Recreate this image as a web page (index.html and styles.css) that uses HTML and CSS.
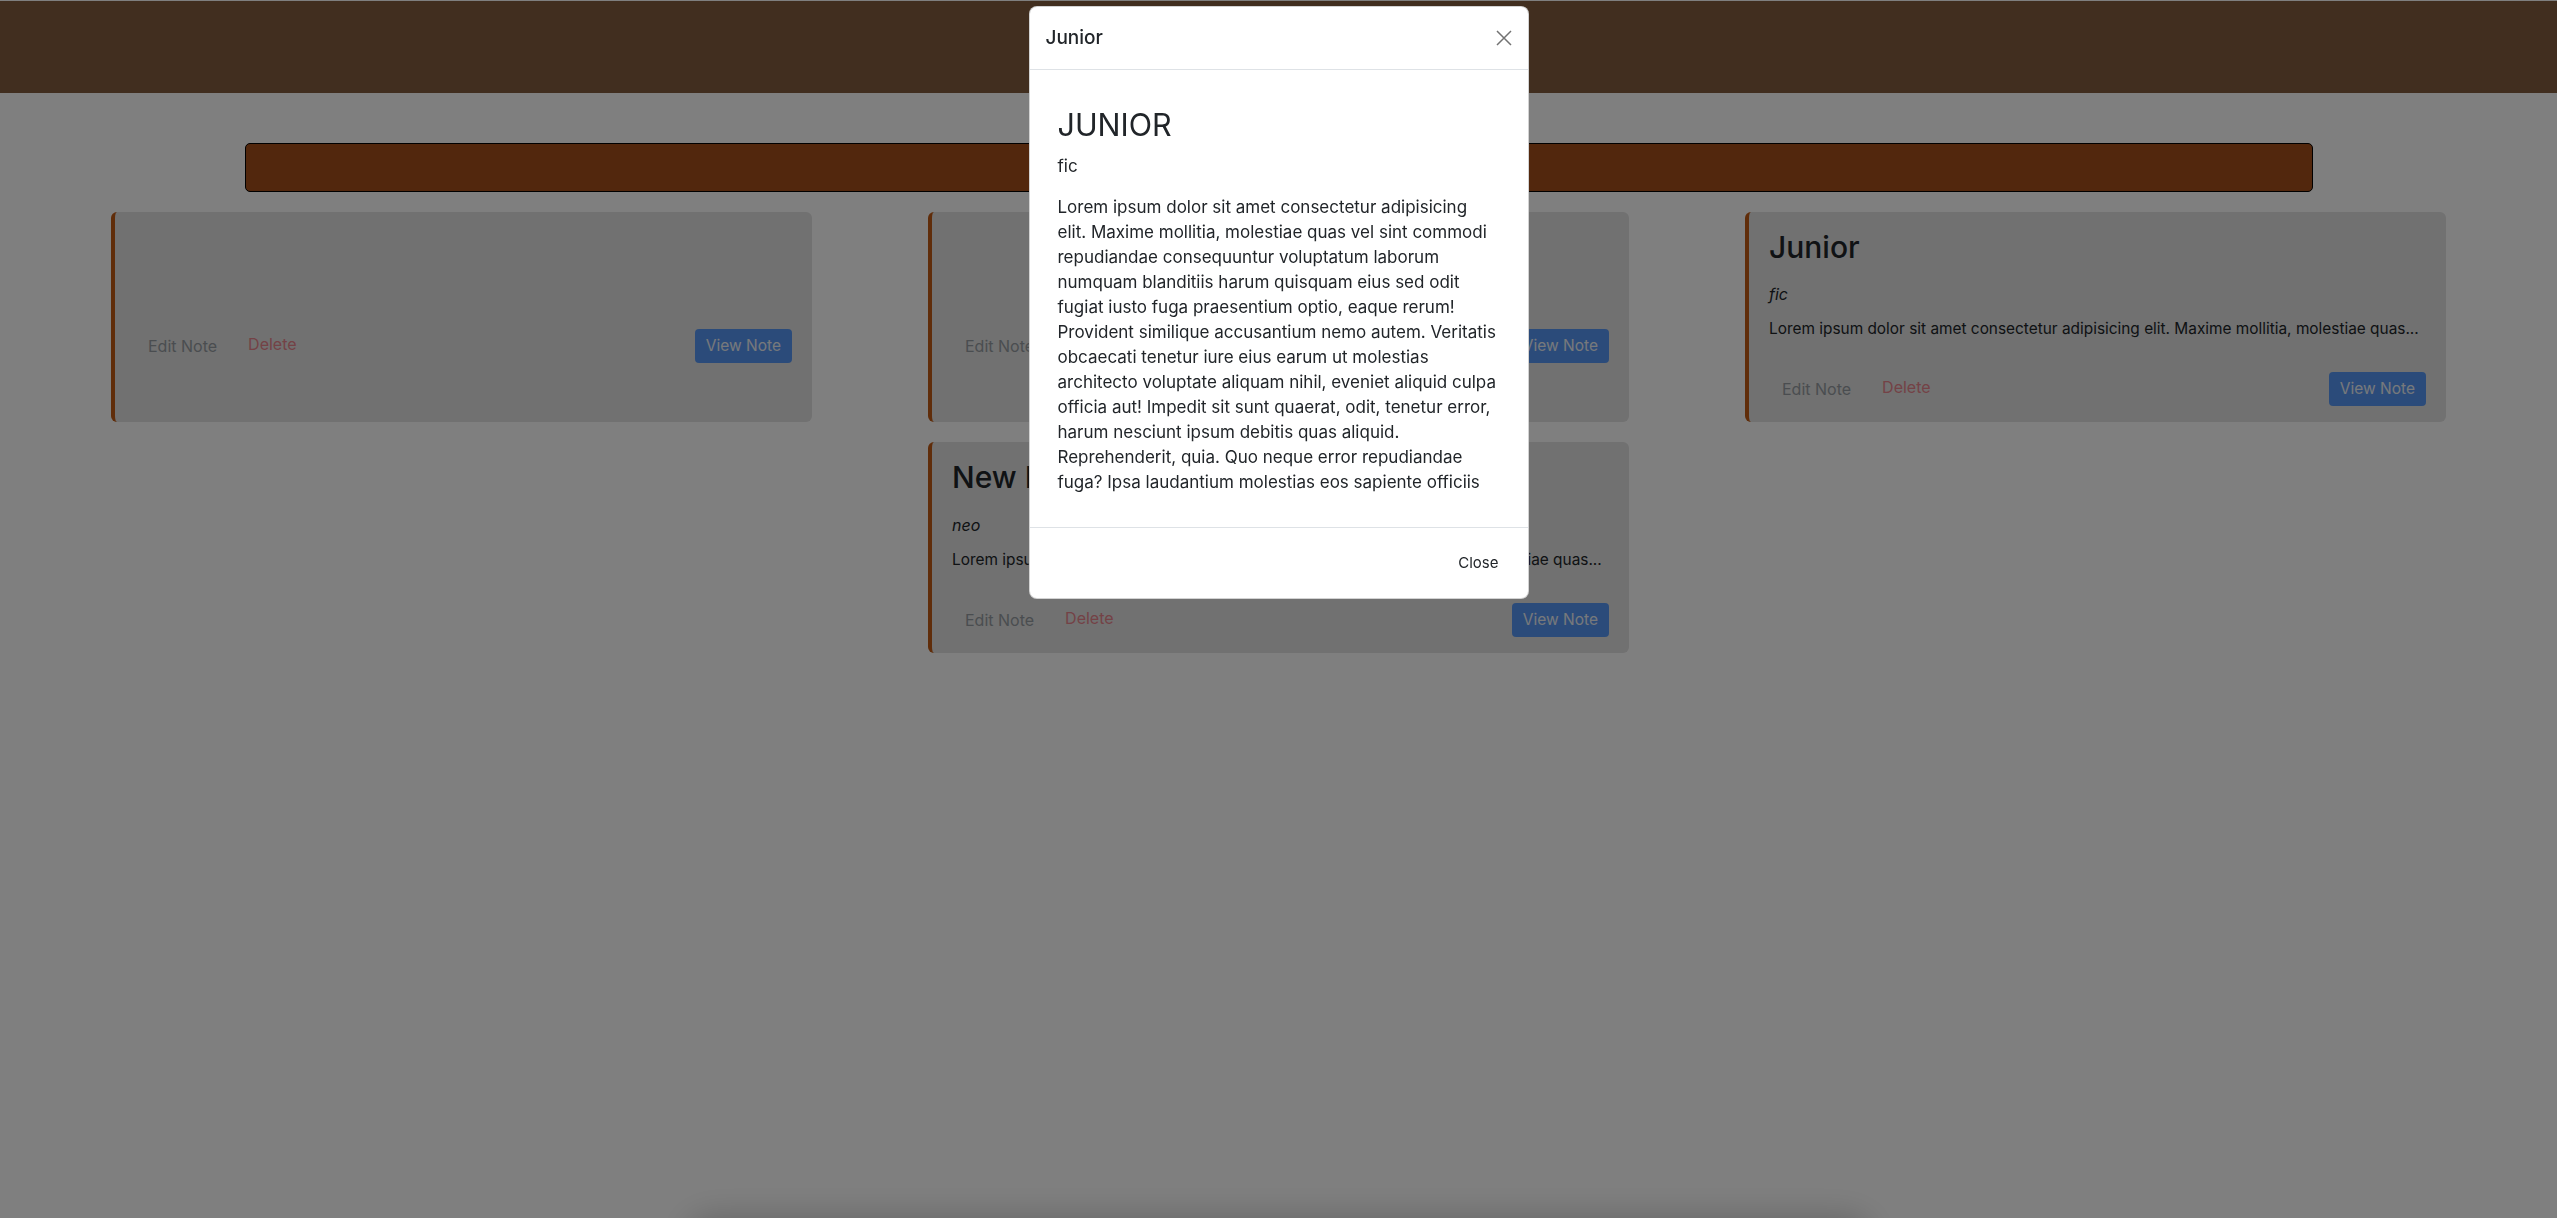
FILE: index.html
```html
<!DOCTYPE html>
<html lang="en">
<head>
<meta charset="utf-8">
<title>Notes</title>
<link rel="stylesheet" href="styles.css">
</head>
<body>
<header class="topbar"></header>
<main class="page">
  <div class="banner"></div>
  <section class="notes">
    <article class="note">
      <div class="note-body">
        <h2 class="note-title"></h2>
        <p class="note-tag"></p>
        <p class="note-text"></p>
      </div>
      <div class="note-actions">
        <div class="note-actions-left">
          <button class="btn btn-edit">Edit Note</button>
          <button class="btn btn-delete">Delete</button>
        </div>
        <button class="btn btn-view">View Note</button>
      </div>
    </article>
    <article class="note">
      <div class="note-body">
        <h2 class="note-title"></h2>
        <p class="note-tag"></p>
        <p class="note-text"></p>
      </div>
      <div class="note-actions">
        <div class="note-actions-left">
          <button class="btn btn-edit">Edit Note</button>
          <button class="btn btn-delete">Delete</button>
        </div>
        <button class="btn btn-view">View Note</button>
      </div>
    </article>
    <article class="note">
      <div class="note-body">
        <h2 class="note-title">Junior</h2>
        <p class="note-tag">fic</p>
        <p class="note-text">Lorem ipsum dolor sit amet consectetur adipisicing elit. Maxime mollitia, molestiae quas...</p>
      </div>
      <div class="note-actions">
        <div class="note-actions-left">
          <button class="btn btn-edit">Edit Note</button>
          <button class="btn btn-delete">Delete</button>
        </div>
        <button class="btn btn-view">View Note</button>
      </div>
    </article>
    <article class="note">
      <div class="note-body">
        <h2 class="note-title">New Note</h2>
        <p class="note-tag">neo</p>
        <p class="note-text">Lorem ipsum dolor sit amet consectetur adipisicing elit. Maxime mollitia, molestiae quas...</p>
      </div>
      <div class="note-actions">
        <div class="note-actions-left">
          <button class="btn btn-edit">Edit Note</button>
          <button class="btn btn-delete">Delete</button>
        </div>
        <button class="btn btn-view">View Note</button>
      </div>
    </article>
  </section>
</main>
<div class="dock"></div>

<div class="backdrop"></div>
<div class="modal">
  <div class="modal-dialog">
    <div class="modal-header">
      <h5 class="modal-title">Junior</h5>
      <button class="btn-close" aria-label="Close">
        <svg width="16" height="16" viewBox="0 0 16 16"><path d="M1 1 L15 15 M15 1 L1 15" stroke="#000" stroke-width="1.5" fill="none"/></svg>
      </button>
    </div>
    <div class="modal-body">
      <div class="note-detail">
        <h2 class="detail-title">JUNIOR</h2>
        <p class="detail-tag">fic</p>
        <p class="detail-text">Lorem ipsum dolor sit amet consectetur adipisicing elit. Maxime mollitia, molestiae quas vel sint commodi repudiandae consequuntur voluptatum laborum numquam blanditiis harum quisquam eius sed odit fugiat iusto fuga praesentium optio, eaque rerum! Provident similique accusantium nemo autem. Veritatis obcaecati tenetur iure eius earum ut molestias architecto voluptate aliquam nihil, eveniet aliquid culpa officia aut! Impedit sit sunt quaerat, odit, tenetur error, harum nesciunt ipsum debitis quas aliquid. Reprehenderit, quia. Quo neque error repudiandae fuga? Ipsa laudantium molestias eos sapiente officiis</p>
      </div>
    </div>
    <div class="modal-footer">
      <button class="btn btn-close-text">Close</button>
    </div>
  </div>
</div>
</body>
</html>
```
FILE: styles.css
```css
* { box-sizing: border-box; }

html, body {
  margin: 0;
  height: 100%;
}

body {
  padding-top: 1px;
  background: #ffffff;
  color: #212529;
  font-family: Inter, "Noto Sans", "Liberation Sans", sans-serif;
  font-size: 16px;
  line-height: 1.5;
  overflow: hidden;
}

.topbar {
  height: 92px;
  background: #825c3e;
}

.page {
  padding-top: 50px;
}

.banner {
  width: 2068px;
  height: 49px;
  margin: 0 auto 20px;
  background: #a44e1a;
  border: 1px solid #000;
  border-radius: 5px;
}

.notes {
  width: 2335px;
  margin: 0 auto;
  display: flex;
  flex-wrap: wrap;
  justify-content: center;
  column-gap: 116px;
  row-gap: 20px;
}

.note {
  width: 701px;
  background: #e2e2e2;
  border-left: 4px solid #c05a14;
  border-radius: 6px;
  padding: 16px 20px;
}

.note-title {
  margin: 0 0 16px;
  font-size: 30px;
  line-height: 38.4px;
  font-weight: 500;
  color: #212529;
}

.note-title:empty {
  margin-bottom: 11px;
}

.note-tag {
  margin: 0 0 12px;
  min-height: 24px;
  font-size: 16px;
  line-height: 24px;
  font-style: italic;
}

.note-text {
  margin: 0 0 16px;
  min-height: 22px;
  font-size: 15.4px;
  line-height: 22px;
  white-space: nowrap;
  overflow: hidden;
  text-overflow: ellipsis;
}

.note-actions {
  padding-top: 16px;
  display: flex;
  justify-content: space-between;
  align-items: center;
}

.note-actions-left {
  display: flex;
  align-items: center;
  gap: 5px;
}

.btn {
  font-family: inherit;
  font-size: 16px;
  line-height: 24px;
  padding: 4px 12px;
  border: 1px solid transparent;
  border-radius: 4px;
  background: none;
  cursor: pointer;
}

.btn-edit {
  color: #959ba0;
}

.btn-delete {
  color: #e8848c;
  position: relative;
  top: -2px;
}

.btn-view {
  padding: 4px 10px;
  font-size: 15.5px;
  background: #5797f4;
  color: #eef2f8;
}

.dock {
  position: fixed;
  left: 50%;
  bottom: -80px;
  width: 1180px;
  height: 80px;
  margin-left: -590px;
  border-radius: 20px;
  background: #fff;
  box-shadow: 0 0 34px rgba(0, 0, 0, 0.22);
}

.backdrop {
  position: fixed;
  inset: 0;
  background: rgba(0, 0, 0, 0.5);
}

.modal {
  position: fixed;
  inset: 0;
  display: flex;
  justify-content: center;
  align-items: flex-start;
  padding-top: 6px;
}

.modal-dialog {
  width: 500px;
  background: #fff;
  border: 1px solid rgba(0, 0, 0, 0.175);
  border-radius: 8px;
  overflow: hidden;
}

.modal-header {
  display: flex;
  align-items: center;
  justify-content: space-between;
  padding: 16px;
  border-bottom: 1px solid #dee2e6;
}

.modal-title {
  margin: 0;
  font-size: 19px;
  line-height: 30px;
  font-weight: 500;
  color: #212529;
}

.btn-close {
  width: 32px;
  height: 32px;
  margin: -8px -8px -8px auto;
  padding: 8px;
  border: 0;
  background: none;
  opacity: 0.55;
  display: flex;
  align-items: center;
  justify-content: center;
}

.modal-body {
  padding: 16px;
}

.note-detail {
  padding: 20px 12px 0;
}

.detail-title {
  margin: 0 0 10px;
  font-size: 30.5px;
  line-height: 38.4px;
  font-weight: 400;
  color: #212529;
}

.detail-tag,
.detail-text {
  margin: 0 0 16px;
  font-size: 17px;
  line-height: 25px;
  color: #212529;
}

.modal-footer {
  display: flex;
  justify-content: flex-end;
  padding: 12px;
  border-top: 1px solid #dee2e6;
}

.btn-close-text {
  margin: 4px;
  padding: 6px 12px;
  font-size: 15px;
  line-height: 24px;
  color: #212529;
}
```
